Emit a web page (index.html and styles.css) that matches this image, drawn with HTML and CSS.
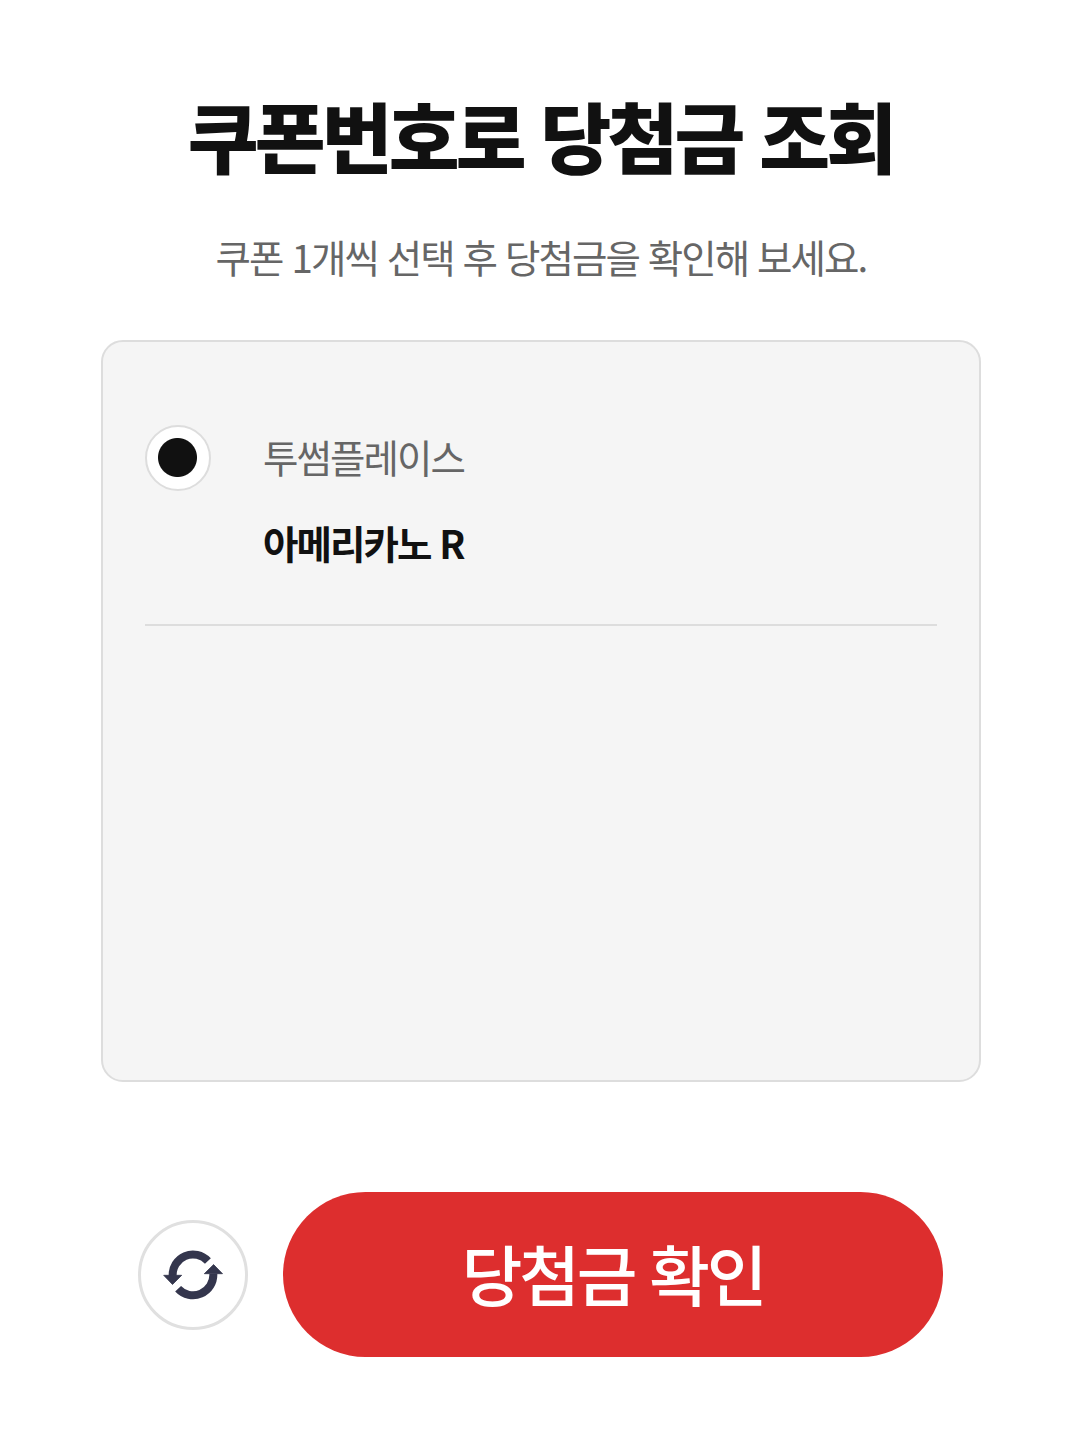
FILE: index.html
```html
<!DOCTYPE html>
<html lang="ko">
<head>
    <meta charset="UTF-8">
    <meta name="viewport" content="width=device-width, initial-scale=1.0">
    <title>쿠폰번호로 당첨금 조회</title>
    <link rel="stylesheet" href="styles.css">
</head>
<body>
    <main class="container">
        <h1>쿠폰번호로 당첨금 조회</h1>
        <p class="desc">쿠폰 1개씩 선택 후 당첨금을 확인해 보세요.</p>

        <div class="coupon-list">
            <label class="coupon">
                <input type="radio" name="coupon" checked>
                <span class="coupon-info">
                    <span class="brand">투썸플레이스</span>
                    <strong class="product">아메리카노 R</strong>
                </span>
            </label>
        </div>

        <div class="buttons">
            <button type="button" class="refresh" aria-label="새로고침">
                <svg viewBox="0 0 60 50" width="60" height="50">
                    <path class="arc" d="M9.700 26 A20.300 20.300 0 0 1 44.900 11 M50.300 23.800 A20.300 20.300 0 0 1 15.100 38.700"/>
                    <path class="head" d="M0.700 25.300 H18.700 L9.500 34.500 Z M41.300 23.700 H59.500 L50.600 14.600 Z"/>
                </svg>
            </button>
            <button type="button" class="submit">당첨금 확인</button>
        </div>
    </main>
</body>
</html>
```

FILE: styles.css
```css
* {
    box-sizing: border-box;
}
body {
    margin: 0;
    background: #fff;
    color: #111;
    font-family: "Noto Sans CJK KR", sans-serif;
}
.container {
    width: 880px;
    margin: 0 auto;
    padding-top: 80px;
    transform: translateX(1px);
}
h1 {
    margin: 0;
    font-size: 77px;
    line-height: 110px;
    font-weight: 900;
    letter-spacing: -3.85px;
    text-align: center;
    text-indent: -1px;
    white-space: nowrap;
}
.desc {
    margin: 38px 0 0;
    color: #666;
    font-size: 38.5px;
    line-height: 56px;
    letter-spacing: -1.925px;
    text-align: center;
    white-space: nowrap;
}
.coupon-list {
    height: 742px;
    margin-top: 56px;
    padding: 0 42px;
    background: #f5f5f5;
    border: 2px solid #ddd;
    border-radius: 22px;
}
.coupon {
    display: flex;
    align-items: flex-start;
    height: 284px;
    padding-top: 83px;
    border-bottom: 2px solid #ddd;
}
.coupon input {
    appearance: none;
    width: 66px;
    height: 66px;
    margin: 0 52px 0 0;
    border: 2px solid #ddd;
    border-radius: 50%;
    background: radial-gradient(circle at 30.500px 30.500px, #111 19px, #fff 20px);
}
.coupon-info {
    display: flex;
    flex-direction: column;
    gap: 30px;
    font-size: 38.5px;
    line-height: 56px;
    letter-spacing: -1.925px;
    padding-top: 3px;
}
.brand {
    color: #666;
}
.product {
    font-weight: 700;
}
.buttons {
    display: flex;
    align-items: center;
    gap: 35px;
    margin-top: 110px;
    padding-left: 37px;
}
button {
    padding: 0;
    font-family: inherit;
    cursor: pointer;
}
.refresh {
    display: flex;
    align-items: center;
    justify-content: center;
    width: 110px;
    height: 110px;
    border: 3px solid #e0e0e0;
    border-radius: 50%;
    background: #fff;
}
.refresh svg {
    overflow: visible;
}
.arc {
    fill: none;
    stroke: #34364d;
    stroke-width: 8;
}
.head {
    fill: #34364d;
    stroke: #34364d;
    stroke-width: 0.8;
    stroke-linejoin: round;
}
.submit {
    width: 660px;
    height: 165px;
    padding-bottom: 5px;
    border: 0;
    border-radius: 83px;
    background: #dd2e2e;
    color: #fff;
    font-size: 66px;
    font-weight: 500;
    letter-spacing: -3.3px;
}
```
